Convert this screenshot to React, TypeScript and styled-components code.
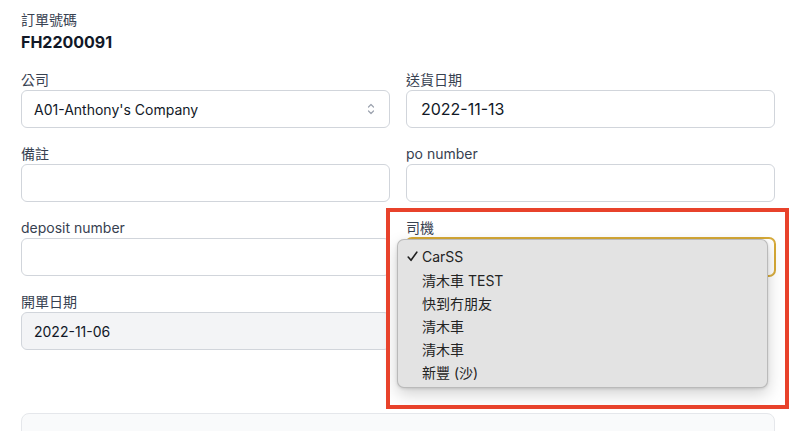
import React from "react";
import styled, { createGlobalStyle, css } from "styled-components";

const GlobalStyle = createGlobalStyle`
  html, body { margin: 0; padding: 0; background: #ffffff; }
  body {
    font-family: Inter, "Noto Sans CJK TC", "Noto Sans", sans-serif;
    color: #111827;
    -webkit-font-smoothing: antialiased;
  }
  * { box-sizing: border-box; }
`;

const Page = styled.div`
  position: relative;
  height: 431px;
  overflow: hidden;
  padding: 10px 21px 0;
`;

const Header = styled.div`
  display: flex;
  flex-direction: column;
`;

const OrderLabel = styled.div`
  font-size: 14px;
  line-height: 20px;
  color: #374151;
`;

const OrderNumber = styled.div`
  font-size: 16px;
  font-weight: 700;
  line-height: 24px;
  color: #111827;
`;

const Grid = styled.div`
  display: grid;
  grid-template-columns: 1fr 1fr;
  column-gap: 16px;
  row-gap: 16px;
  margin-top: 16px;
`;

const Field = styled.div`
  position: relative;
  display: flex;
  flex-direction: column;
`;

const Label = styled.label`
  font-size: 14px;
  line-height: 20px;
  color: #374151;
`;

const Box = styled.div<{ $variant?: "default" | "disabled" | "focus"; $big?: boolean; $pad?: number }>`
  height: 38px;
  display: flex;
  align-items: center;
  justify-content: space-between;
  padding: 0 ${(p) => p.$pad ?? 12}px;
  border: 1px solid #d1d5db;
  border-radius: 6px;
  background: #ffffff;
  font-size: ${(p) => (p.$big ? 16 : 14)}px;
  color: #111827;
  ${(p) =>
    p.$variant === "disabled" &&
    css`
      background: #f3f4f6;
    `}
  ${(p) =>
    p.$variant === "focus" &&
    css`
      border-color: #d6a936;
      box-shadow: 0 0 0 1px #d6a936;
    `}
`;

const Chevrons = styled.svg`
  width: 10px;
  height: 14px;
  flex: none;
  margin-right: 1px;
`;

const Card = styled.div`
  margin-top: 63px;
  height: 60px;
  border: 1px solid #e5e7eb;
  border-radius: 8px;
  background: #f9fafb;
`;

const Menu = styled.div`
  position: absolute;
  left: -9px;
  top: 21px;
  width: 371px;
  height: 149px;
  padding: 5px 0 6px;
  background: #e3e3e3;
  border: 0.5px solid rgba(0, 0, 0, 0.18);
  border-radius: 7px;
  box-shadow: 0 6px 16px rgba(0, 0, 0, 0.18), 0 1px 3px rgba(0, 0, 0, 0.12);
  z-index: 5;
`;

const MenuItem = styled.div`
  position: relative;
  height: 23px;
  display: flex;
  align-items: center;
  padding-left: 24px;
  font-size: 14px;
  color: #242424;
`;

const Check = styled.svg`
  position: absolute;
  left: 9px;
  top: 6px;
  width: 11px;
  height: 11px;
`;

const Annotation = styled.div`
  position: absolute;
  left: 386px;
  top: 208px;
  width: 403px;
  height: 201px;
  border: 4px solid #e8422b;
  pointer-events: none;
  z-index: 10;
`;

const drivers = ["CarSS", "清木車 TEST", "快到冇朋友", "清木車", "清木車", "新豐 (沙)"];

export default function App() {
  return (
    <>
      <GlobalStyle />
      <Page>
        <Header>
          <OrderLabel>訂單號碼</OrderLabel>
          <OrderNumber>FH2200091</OrderNumber>
        </Header>
        <Grid>
          <Field>
            <Label>公司</Label>
            <Box>
              <span>A01-Anthony's Company</span>
              <Chevrons viewBox="0 0 10 14" fill="none" stroke="#9ca3af" strokeWidth="1.2" strokeLinecap="round" strokeLinejoin="round">
                <path d="M2.5 5 L5 2.5 L7.5 5" />
                <path d="M2.5 9 L5 11.5 L7.5 9" />
              </Chevrons>
            </Box>
          </Field>
          <Field>
            <Label>送貨日期</Label>
            <Box $big $pad={14}>
              <span>2022-11-13</span>
            </Box>
          </Field>
          <Field>
            <Label>備註</Label>
            <Box />
          </Field>
          <Field>
            <Label>po number</Label>
            <Box />
          </Field>
          <Field>
            <Label>deposit number</Label>
            <Box />
          </Field>
          <Field>
            <Label>司機</Label>
            <Box $variant="focus" />
            <Menu>
              {drivers.map((d, i) => (
                <MenuItem key={i}>
                  {i === 0 && (
                    <Check viewBox="0 0 11 11" fill="none" stroke="#1f1f1f" strokeWidth="1.6" strokeLinecap="round" strokeLinejoin="round">
                      <path d="M1.2 6 L4 9.3 L9.8 1.2" />
                    </Check>
                  )}
                  {d}
                </MenuItem>
              ))}
            </Menu>
          </Field>
          <Field>
            <Label>開單日期</Label>
            <Box $variant="disabled">
              <span>2022-11-06</span>
            </Box>
          </Field>
        </Grid>
        <Card />
        <Annotation />
      </Page>
    </>
  );
}
